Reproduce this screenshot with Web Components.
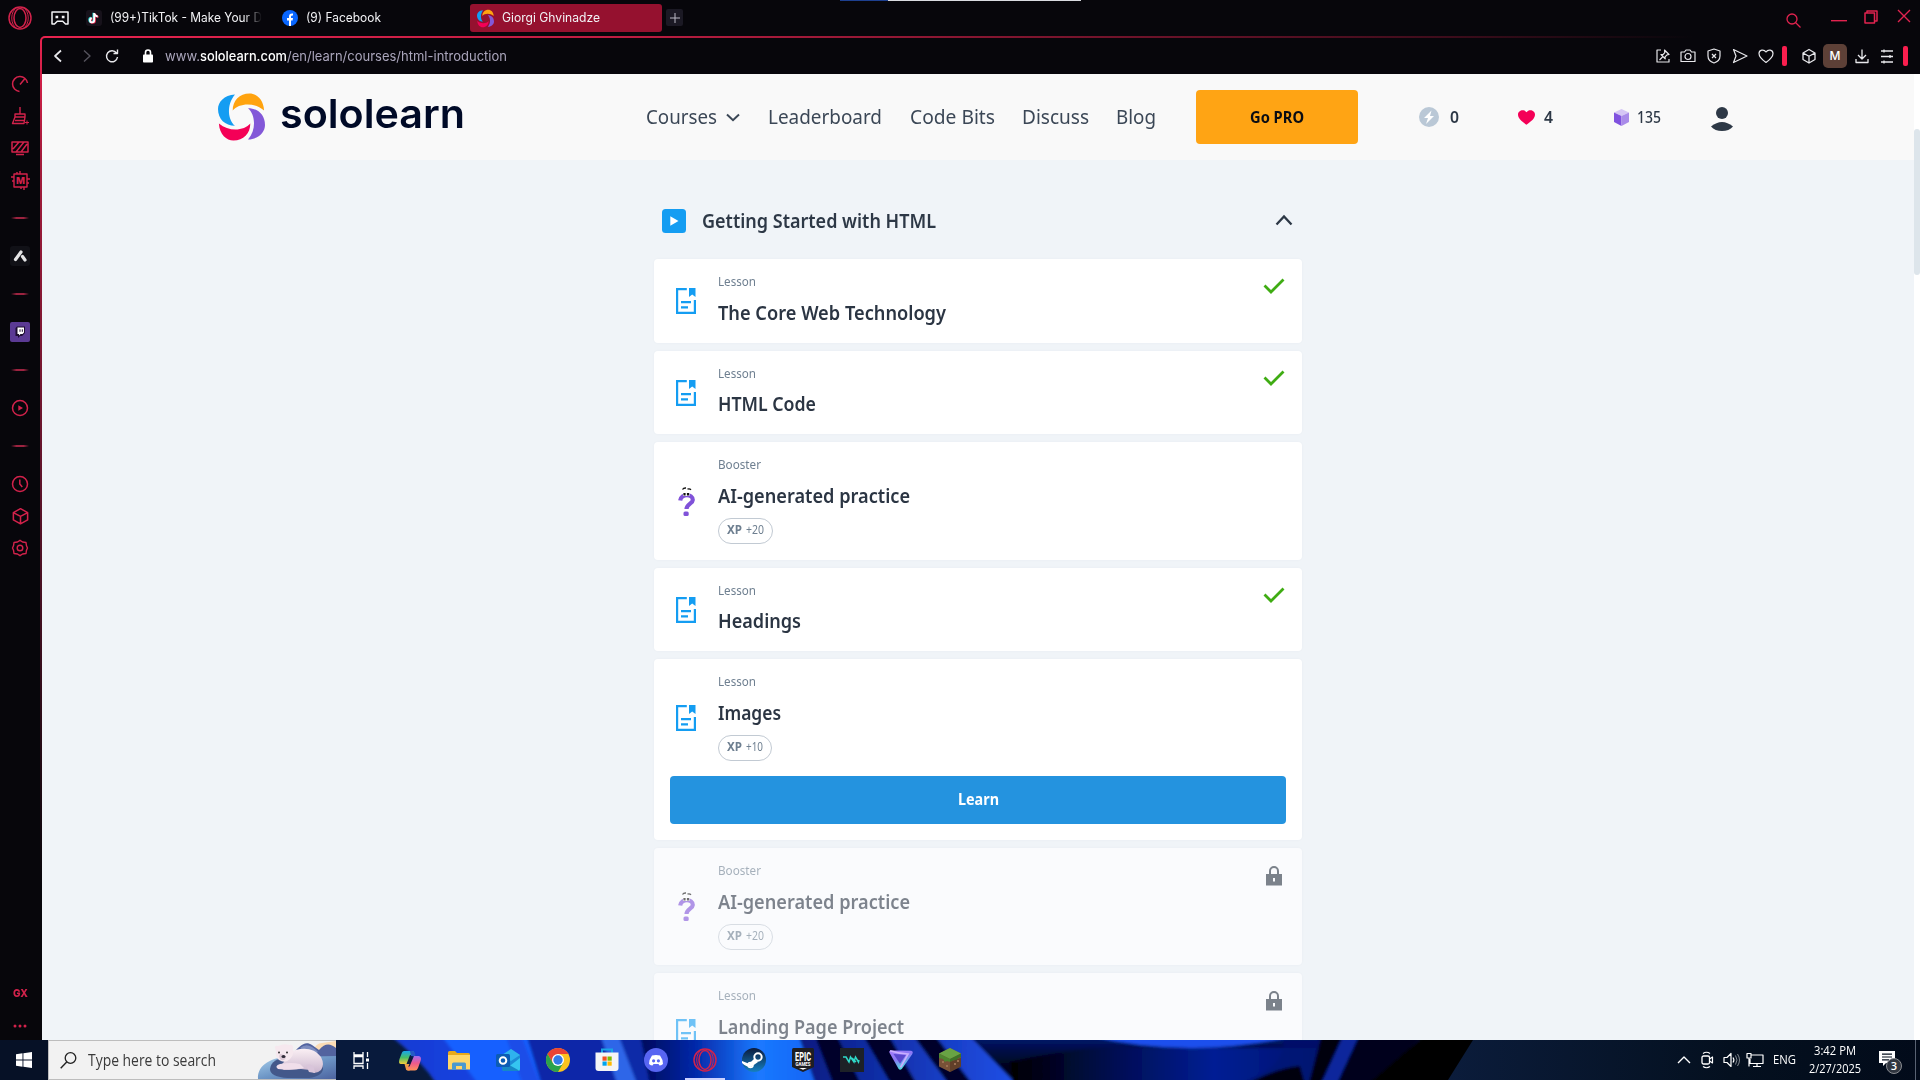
<!DOCTYPE html>
<html lang="en">
<head>
<meta charset="utf-8">
<title>Sololearn</title>
<style>
html,body{margin:0;padding:0;width:1920px;height:1080px;overflow:hidden;background:#07060b}
body{font-family:"Noto Sans","Open Sans",sans-serif}
</style>
</head>
<body>
<app-desktop></app-desktop>
<script>
const define=(n,c)=>customElements.define(n,c);
const mount=(el,html)=>{const t=document.createElement('template');t.innerHTML=html;el.attachShadow({mode:'open'}).appendChild(t.content.cloneNode(true));};

const swirl='M17 .4C6 1 0 8 0 15 0 25 7 31.800 17 31.800 10 26 8 11 17 .4Z';
const logo=`<path d="${swirl}" fill="#149df2"/><path d="${swirl}" fill="#ffa30f" transform="rotate(90 23.500 23)"/><path d="${swirl}" fill="#8358d8" transform="rotate(180 23.500 23)"/><path d="${swirl}" fill="#f40057" transform="rotate(270 23.500 23)"/>`;
const opera='<g fill="none" stroke="#d2224b" stroke-width="1.500"><circle cx="12" cy="12" r="11"/><ellipse cx="12" cy="12" rx="6" ry="9.500"/><path d="M9 1.500C2 5 2 19 9 22.500M15 1.500c7 3.500 7 17.500 0 21" stroke-width="1"/></g>';
const L='fill="none" stroke="currentColor" stroke-linejoin="round"';
/* name: [viewBox width, viewBox height, markup] */
const ICONS={
 logo:[47,46,logo],
 opera:[24,24,opera],
 mask:[18,14,`<path d="M1 1h16v12h-2.500l-2.800-2.700H6.300L3.500 13H1Z" ${L} stroke-width="1.500"/><path d="M4.500 4.700h2.700v2.600H4.500zM10.800 4.700h2.700v2.600h-2.700z" fill="currentColor"/>`],
 tiktok:[16,16,'<rect width="16" height="16" rx="3" fill="#17121b"/><g fill="none" stroke-width="1.900"><path d="M8 3v7.200a2.100 2.100 0 1 1-2.300-2.100M8 3.500q.8 2.700 3.500 2.900" stroke="#25d4cf" transform="translate(-.6 -.3)"/><path d="M8 3v7.200a2.100 2.100 0 1 1-2.300-2.100M8 3.500q.8 2.700 3.500 2.900" stroke="#e8254c" transform="translate(1 .5)"/><path d="M8 3v7.200a2.100 2.100 0 1 1-2.300-2.100M8 3.500q.8 2.700 3.500 2.900" stroke="#fff" transform="translate(.2 .1)"/></g>'],
 facebook:[16,16,'<circle cx="8" cy="8" r="8" fill="#0866ff"/><path d="M7 16v-5.500H5V8h2V6.500C7 4.300 8.300 3.200 11 3.500v2c-1.500 0-2 .2-2 1.300V8h2l-.4 2.500H9V16Z" fill="#fff"/>'],
 plus:[10,10,`<path d="M5 0v10M0 5h10" ${L}/>`],
 search:[15,15,`<circle cx="6" cy="6" r="5" ${L} stroke-width="1.300"/><path d="m9.500 9.500 5 5" ${L} stroke-width="1.300"/>`],
 min:[16,2,'<path d="M0 0h16v1.400H0z" fill="currentColor"/>'],
 restore:[14,14,`<path d="M1 3h9.500v10H1zM3 3V1h10v10h-2.500" ${L} stroke-width="1.500"/>`],
 close:[14,14,`<path d="m1 1 12 12M13 1 1 13" ${L} stroke-width="1.400"/>`],
 back:[10,14,`<path d="M8 1.500 2 7l6 5.500" ${L} stroke-width="1.700"/>`],
 fwd:[10,14,`<path d="m2 1.500 6 5.500-6 5.500" ${L} stroke-width="1.400"/>`],
 reload:[14,14,`<path d="M11.500 4A5.500 5.500 0 1 0 12.500 8M12.500.5V4.500H8.500" ${L} stroke-width="1.400"/>`],
 padlock:[12,14,`<rect x="1" y="5.500" width="10" height="8" rx=".8" fill="currentColor"/><path d="M3.500 6V3.500a2.500 2.500 0 0 1 5 0V6" ${L} stroke-width="1.600"/>`],
 pin:[16,16,`<path d="M6 2H2v12h12v-3M9.500 2l4.500 4.500-2 .3-2 2 .2 2L6 6.500l2 .2 1.800-2ZM7.500 9 4.500 12" ${L} stroke-width="1.200"/>`],
 camera:[16,16,`<path d="M1 4h3.500L6 2h4l1.500 2H15v9.500H1z" ${L} stroke-width="1.200"/><circle cx="8" cy="8.500" r="3" ${L} stroke-width="1.200"/>`],
 shield:[16,16,`<path d="M8 1 14 3v5c0 3.500-3 6-6 7-3-1-6-3.500-6-7V3ZM6 6l4 4m0-4-4 4" ${L} stroke-width="1.200"/>`],
 send:[16,16,`<path d="M1.500 1.500 15 8 1.500 14.500 4 8Z" ${L} stroke-width="1.200"/>`],
 heart:[16,16,`<path d="M8 14.500C4.500 12 1 9 1 5.500 1 1.500 6 1 8 4c2-3 7-2.500 7 1.500 0 3.500-3.500 6.500-7 9Z" ${L} stroke-width="1.200"/>`],
 cube:[16,16,`<path d="M8 1.500 14 5v6.500L8 15l-6-3.500V5ZM2 5l6 3.300L14 5M8 8.300V15" ${L} stroke-width="1.300"/>`],
 download:[16,16,`<path d="M8 1.500v9M4 7l4 4 4-4M2 11v3.500h12V11" ${L} stroke-width="1.300"/>`],
 sliders:[16,16,`<path d="M2 3h12M2 8.500h12M2 14h12M5 1.500v3M11 7v3M5 12.500v3" ${L} stroke-width="1.300"/>`],
 gauge:[18,18,`<path d="M8.500 16.500A7.500 7.500 0 1 1 16.500 8M9 9.500l5-6" ${L} stroke-width="1.500"/>`],
 broom:[18,18,`<path d="M9 0v7M4 7h10v3H4ZM4 10 1.500 16.500h11.500l1-6.500M4 13.500h10" ${L} stroke-width="1.400"/><path d="M16 13.500v4M14 15.500h4" ${L}/>`],
 screen:[18,16,`<path d="M1 2h16v10H1ZM5 14.500h8M2 9l6-7M5 12l8-10M10 12l6-8" ${L} stroke-width="1.500"/>`],
 chip:[20,20,`<path d="M4 4h13v13H4ZM7 4V2M10 4V1M14 17v3M11 17v2M4 7H1M4 11H2M17 9h3M17 13h2" ${L} stroke-width="1.400"/><text x="10.500" y="14" text-anchor="middle" font-family="Inter" font-weight="800" font-size="9.500" fill="currentColor">M</text>`],
 astro:[20,20,'<rect width="20" height="20" rx="3" fill="#111117"/><path d="m11 6-5.500 7.500M12.500 10.500 15 14" stroke="#e6e6e8" stroke-width="3.200" stroke-linecap="round"/>'],
 twitch:[20,20,'<rect width="20" height="20" rx="2" fill="#5b3a94"/><path d="M5.500 6 7 4.500h8V11l-3 3h-2l-2 2v-2H5.500Z" fill="#1d0d31"/><path d="M7.500 5.500H14v5L12.500 12H10.500L9 13.500V12H7.500Z" fill="#fff"/><path d="M10 7.300v2.500M12.300 7.300v2.500" stroke="#1d0d31"/>'],
 play:[18,18,`<circle cx="9" cy="9" r="7.500" ${L} stroke-width="1.500"/><path d="M7.300 6.200 12 9l-4.700 2.800Z" fill="currentColor"/>`],
 clock:[18,18,`<circle cx="9" cy="9" r="7.500" ${L} stroke-width="1.500"/><path d="M8.800 4.500V9l2.500 3" ${L} stroke-width="1.500"/>`],
 gear:[18,18,`<path d="M9 1.300 11.500 3l3.500.5.500 3.300L16.500 9l-1 2.200-.5 3.300-3.500.5L9 16.700 6.500 15 3 14.500l-.5-3.300L1.500 9l1-2.200L3 3.500 6.500 3Z" ${L} stroke-width="1.400"/><circle cx="9" cy="9" r="2.800" ${L} stroke-width="1.400"/>`],
 dots:[14,4,'<g fill="currentColor"><circle cx="2" cy="2" r="1.500"/><circle cx="7" cy="2" r="1.500"/><circle cx="12" cy="2" r="1.500"/></g>'],
 chevdown:[14,9,'<path d="m1 1.500 6 5.700 6-5.700" fill="none" stroke="currentColor" stroke-width="2"/>'],
 chevup:[18,11,'<path d="m1.500 9.500 7.500-8 7.500 8" fill="none" stroke="currentColor" stroke-width="2.300"/>'],
 bolt:[20,20,'<circle cx="10" cy="10" r="10" fill="#bac8d6"/><path d="M12.500 3.500 5 11h4l-2 6 8-8h-4Z" fill="#fff"/>'],
 heartfill:[17,15,'<path d="M8.500 14.700C4 11.500 0 8.500 0 4.500 0 .3 6-1.500 8.500 2.300 11-1.500 17 .3 17 4.500c0 4-4 7-8.500 10.200Z" fill="#f40057"/>'],
 gem:[15,17,'<path d="M7.500 0 15 3.500 7.500 7 0 3.500Z" fill="#d5c6f5"/><path d="M0 3.500 7.500 7v10L0 13Z" fill="#8052df"/><path d="M15 3.500 7.500 7v10L15 13Z" fill="#a98be9"/>'],
 person:[22,24,'<circle cx="11" cy="6" r="6" fill="#2d3846"/><path d="M0 19.500Q11 10.500 22 19.500 18 24 11 24T0 19.500Z" fill="#2d3846"/>'],
 module:[24,24,'<rect width="24" height="24" rx="3.500" fill="#149df2"/><path d="M8.300 7.300 16.500 12l-8.200 4.700Z" fill="#fff"/>'],
 lesson:[20,26,'<path d="M10.800 1.100H1.100v23.800h17.800V12" fill="none" stroke="#149df2" stroke-width="2.200"/><path d="M13 0h6.500v9L16.200 6.500 13 9Z" fill="#149df2"/><path d="M5 14.200h10M5 19.300h7" stroke="#149df2" stroke-width="2.200"/>'],
 booster:[18,29,'<path d="M2.200 13.500C3 6.500 15 6.500 14.800 13c0 3.500-6.300 4-6.300 9" fill="none" stroke="#8052d9" stroke-width="4.200"/><rect x="5.500" y="24.500" width="5.200" height="4.500" rx="1.500" fill="#8052d9"/><path d="M5 5h6.500v4H5Z" fill="#fff"/><path d="M6.500 6v2.500M10 6v2.500" stroke="#111" stroke-width="2.200"/><path d="M4.500 2.500Q5.500.8 8 1M9.500 2.200q2-1 3.500.6" stroke="#111" fill="none" stroke-width="1.300"/>'],
 check:[22,16,'<path d="m1.500 7.500 6.500 6.500L20.500 1.500" fill="none" stroke="#3fac13" stroke-width="2.800"/>'],
 lock:[16,20,'<path d="M4 8V5a4 4 0 0 1 8 0v3" fill="none" stroke="#7b828b" stroke-width="2"/><path fill-rule="evenodd" d="M0 8h16v11.500H0ZM7 12v3.500h2V12Z" fill="#7b828b"/>'],
 windows:[16,16,'<path d="M0 2.300 6.500 1.300V7.500H0ZM7.400 1.200 16 0v7.500H7.400ZM0 8.500h6.500v6.200L0 13.700ZM7.400 8.500H16V16l-8.600-1.200Z" fill="#fff"/>'],
 magnify:[17,17,'<circle cx="10.500" cy="6" r="5.300" fill="none" stroke="#222" stroke-width="1.300"/><path d="m6.700 10-6 6.300" stroke="#222" stroke-width="1.400"/>'],
 bear:[78,38,'<defs><linearGradient id="w" x2="1" y2="1"><stop stop-color="#a9d1ed"/><stop offset=".5" stop-color="#6d96c6"/><stop offset="1" stop-color="#4c639f"/></linearGradient><linearGradient id="b" x2="0" y2="1"><stop stop-color="#fbf0f4"/><stop offset="1" stop-color="#cbb6ce"/></linearGradient></defs><path d="M55 10Q58 2 64 2L78 0v20H55Z" fill="#fbdcb5"/><path d="M34 14C41 5 47 -1 54 4L61 9C67 2 72 2 78 7v20H36Z" fill="#52639f"/><path d="M42 7q8-7 18 4l-6 5Z" fill="#7d8dbf"/><path d="M0 38C-1 22 17 15 34 16l44-1v23Z" fill="url(#w)"/><path d="M12 28q1-11 20-12 30-1 33 10 1 9-14 11H30Q12 36 12 28Z" fill="#43588a"/><path d="M29 13C42 5 56 6 63 16q4 8 0 13-3 3-7 3l-4-3-9-1-17 1-5-3 5-5Z" fill="url(#b)"/><path d="M18 10q-3-6 2-5 7-3 11-1 5-1 4 4 1 6-3 10-5 5-11 1-4-3-3-9Z" fill="#f6e8ee"/><path d="M22 13q4 0 6 3-1 4-5 3-3-3-1-6Z" fill="#ddc9d5"/><circle cx="21" cy="11.500" r="1" fill="#333"/><circle cx="29" cy="11.500" r="1" fill="#333"/><ellipse cx="25.500" cy="15.500" rx="2" ry="1.500" fill="#302b38"/><path d="M22 23q12-2 20 0l4 4q-12 3-26 1-4-3 2-5Z" fill="#f0deea"/><path d="M48 24q6-2 8 3l1 5-6-1Z" fill="#d9c5da"/>'],
 taskview:[17,17,'<path d="M1 0v3h9V0M1 17v-3h9v3M1 4.500v7h9v-7ZM14.500 0v5M14.500 11v6" fill="none" stroke="#fff" stroke-width="1.300"/><path d="M13 6.500h3v3h-3z" fill="#fff"/>'],
 copilot:[22,21,'<defs><linearGradient id="c1" x2="0" y2="1"><stop stop-color="#17a5ef"/><stop offset=".5" stop-color="#46bd68"/><stop offset="1" stop-color="#f3ce3b"/></linearGradient><linearGradient id="c2" x2="0" y2="1"><stop stop-color="#a16af1"/><stop offset=".5" stop-color="#ef5a8c"/><stop offset="1" stop-color="#ff9258"/></linearGradient></defs><path d="M5 1h8q3 0 2 4h-4L7.500 14H2Q-1 14 .5 9L3 2.500Q3.500 1 5 1Z" fill="url(#c1)"/><path d="M15 6h5q3 1 1.500 5L19 18q-1 2.500-3 2.500H9q-3 0-2-4h3.500Z" fill="url(#c2)"/><path d="M11 1h2q3 0 3.500 5H12Z" fill="#2559c6"/><path d="M5.500 14h5l-1.500 3q0 3 2 3.500H9q-2 0-3.500-6.500" fill="#ef9c47"/>'],
 folder:[22,19,'<path d="M0 1.500Q0 0 1.500 0H7l2 2h11.500Q22 2 22 4v14H0Z" fill="#e8a91b"/><path d="M0 4h22v14.500H0Z" fill="#ffd768"/><path d="M4 19v-6q0-1.500 1.500-1.500h11Q18 11.500 18 13v6h-4v-4H8v4Z" fill="#4a99cf"/>'],
 outlook:[24,22,'<path d="M6 6 15 0l9 6v14q0 2-2 2H8q-2 0-2-2Z" fill="#1c8ad6"/><path d="m15 0 9 6-9 6-9-6Z" fill="#2fb2ee"/><path d="m7 22 17-13v11q0 2-2 2Z" fill="#35c5f0"/><path d="m6 12 17 9.500-1 .5H8q-2 0-2-2Z" fill="#1687c6"/><rect y="5" width="14" height="13" rx="1.500" fill="#0b5cb5"/><circle cx="7" cy="11.500" r="3.300" fill="none" stroke="#fff" stroke-width="2"/>'],
 chrome:[24,24,'<circle cx="12" cy="12" r="12" fill="#fcc31e"/><path d="M1.600 6A12 12 0 0 1 22.400 6H12L6.800 15Z" fill="#ea4335"/><path d="M1.600 6A12 12 0 0 0 12 24l5.200-9H6.800Z" fill="#2ba24c"/><circle cx="12" cy="12" r="6" fill="#fff"/><circle cx="12" cy="12" r="4.700" fill="#337ae8"/>'],
 store:[24,24,'<path d="M7 6V1.500h10V6" fill="none" stroke="#19a4e5" stroke-width="2"/><path d="M.5 4.500h23V20q0 3-3 3h-17q-3 0-3-3Z" fill="#f4f4f6"/><path d="M7.500 8.500h4.200v4.200H7.500z" fill="#f25022"/><path d="M12.500 8.500h4.200v4.200h-4.200z" fill="#7fba00"/><path d="M7.500 13.500h4.200v4.200H7.500z" fill="#00a4ef"/><path d="M12.500 13.500h4.200v4.200h-4.200z" fill="#ffb900"/>'],
 discord:[24,24,'<circle cx="12" cy="12" r="12" fill="#5865f2"/><path d="M8 7.500Q12 6.300 16 7.500q3 4 3 8.500-2 1.500-3.500 1.500l-1-1.500h-5l-1 1.500Q7 17.500 5 16q0-4.500 3-8.500Z" fill="#fff"/><circle cx="9.600" cy="12.800" r="1.600" fill="#5865f2"/><circle cx="14.400" cy="12.800" r="1.600" fill="#5865f2"/>'],
 steam:[24,24,'<defs><linearGradient id="s" x2="0" y2="1"><stop stop-color="#0b1a3c"/><stop offset="1" stop-color="#1580c0"/></linearGradient></defs><circle cx="12" cy="12" r="12" fill="url(#s)"/><circle cx="16" cy="9" r="3.700" fill="none" stroke="#fff" stroke-width="2"/><path d="m0 13 7 2.800 6-5.800 3 4-7 5Q4 19 0 15Z" fill="#fff"/><circle cx="8.500" cy="17" r="2.500" fill="none" stroke="#fff" stroke-width="1.500"/>'],
 epic:[22,24,'<path d="M1.500 0h19Q22 0 22 2v17l-11 5L0 19V2Q0 0 1.500 0Z" fill="#1e1e22"/><text x="11" y="12.500" text-anchor="middle" textLength="16" lengthAdjust="spacingAndGlyphs" font-family="Roboto" font-weight="800" font-size="13" fill="#fff">EPIC</text><text x="11" y="17.500" text-anchor="middle" textLength="15" lengthAdjust="spacingAndGlyphs" font-family="Roboto" font-weight="700" font-size="5" fill="#fff">GAMES</text><path d="M7 20h8l-4 1.800Z" fill="#fff"/>'],
 wave:[24,24,'<path d="M0 0h24v24H0z" fill="#1d2127"/><path d="M3 9h3l3 5 1.500-5 3.500 5 1.500-5 3 5 .5-2M6 9l3 5M12 10l4 4" fill="none" stroke="#2fd9c9" stroke-width="1.500"/>'],
 proton:[24,24,'<defs><linearGradient id="p" x2=".5" y2="1"><stop stop-color="#a77dfa"/><stop offset=".5" stop-color="#8a78f6"/><stop offset="1" stop-color="#4ce1dd"/></linearGradient></defs><path d="M2 1.500 22 2q3 .5 1 4L13 21.500q-2 2-3.500 0L.5 4Q-.3 2 2 1.500Z" fill="url(#p)"/><path d="m4.500 5.500 12.500.8-6 9.700Z" fill="#5a48cf"/><path d="M1 2q8 3 18 3.500L11.500 20" fill="none" stroke="#c9afff" stroke-width="1.800"/>'],
 minecraft:[22,24,'<path d="M11 0 22 5.500v13L11 24 0 18.500v-13Z" fill="#785137"/><path d="M11 0 22 5.500 11 11 0 5.500Z" fill="#68a344"/><path d="m0 5.500 11 5.500v3l-3-1-2 1-2-3-4-1Z" fill="#4d872f"/><path d="m22 5.500-11 5.500v3l4-2 2 1 2-3 3-1Z" fill="#3d7227"/><path d="M11 14v10l11-5.500V10Z" fill="#543622" opacity=".65"/><path d="M3 13h2v2H3zM7 17h2v2H7zM15 15h2v2h-2zM18 12h2v2h-2z" fill="#9a7051"/>'],
 trayup:[14,8,`<path d="m1 7 6-6 6 6" ${L} stroke-width="1.400"/>`],
 meet:[13,18,`<rect x="1" y="5" width="7.500" height="8" rx="1.500" ${L} stroke-width="1.300"/><path d="m8.500 8 3-2v6l-3-2M2 2.500q3.500-2.500 7 0M2 15.500q3.500 2.500 7 0" ${L} stroke-width="1.200"/>`],
 volume:[17,16,`<path d="M1 5.500h3l4-4v13l-4-4H1Z" ${L} stroke-width="1.200"/><path d="M10 5.500q1.800 2.500 0 5" ${L} stroke-width="1.200"/><g opacity=".5"><path d="M12.500 3.500q3 4.500 0 9M14.500 2q4 6 0 12" ${L}/></g>`],
 network:[18,16,`<path d="M5 3h12v8.500H4V7M7 14.500h8M11 11.500v3M1 1.500h4V6H1ZM3 6v8.500" ${L} stroke-width="1.200"/>`],
 notice:[16,15,'<path d="M0 0h16v12H7l-3 3v-3H0Z" fill="#fff"/><path d="M3 3.200h10M3 6h10M3 8.800h7" stroke="#06101f" stroke-width="1.200"/>']
};

/* <ui-icon name w h> draws one icon, scaled to its box */
define('ui-icon',class extends HTMLElement{
 connectedCallback(){if(this.shadowRoot)return;
  const i=ICONS[this.getAttribute('name')],w=this.getAttribute('w')||i[0],h=this.getAttribute('h')||i[1];
  mount(this,`<style>:host{display:block;flex:none;width:${w}px;height:${h}px}svg{display:block;overflow:visible}</style><svg width="${w}" height="${h}" viewBox="0 0 ${i[0]} ${i[1]}" preserveAspectRatio="none">${i[2]}</svg>`);}
});

/* <fit-text w> keeps its single line exactly w pixels wide */
define('fit-text',class extends HTMLElement{
 connectedCallback(){if(this.shadowRoot)return;
  const w=+this.getAttribute('w');
  mount(this,`<style>:host{display:block;flex:none;width:${w}px;white-space:nowrap}span{display:inline-block;transform-origin:0 50%}</style><span><slot></slot></span>`);
  const s=this.shadowRoot.querySelector('span');
  s.style.transform=`scaleX(${w/s.getBoundingClientRect().width})`;}
});

define('browser-tabs',class extends HTMLElement{connectedCallback(){mount(this,`<style>
:host{display:flex;height:36px;align-items:flex-start;color:#f2f2f5;background:linear-gradient(90deg,#1d3f8f 48px,#d9dbe0 48px) 840px 0/241px 1px no-repeat #07060b;font:12.500px/18px Inter,sans-serif;box-sizing:border-box}
.o{margin:6px 0 0 8px}.k{margin:11px 0 0 19px}.t{display:flex;gap:8px;height:28px;align-items:center;margin-top:4px}
.t1{margin-left:17px;width:176px;-webkit-mask:linear-gradient(90deg,#000 158px,transparent 176px)}.t2{margin-left:20px;width:188px}
.a{background:#95112f;border-radius:3px;width:185px;padding-left:7px}
.p{display:grid;place-items:center;width:17px;height:17px;margin:9px 0 0 4px;background:#1b1924;border-radius:2px;color:#bbb9c4}
.w{display:flex;margin-left:auto;color:#e1234f;padding-right:9px}
</style><ui-icon class="o" name="opera" w="24" h="24"></ui-icon><ui-icon class="k" name="mask"></ui-icon>
<div class="t t1"><ui-icon name="tiktok"></ui-icon><fit-text w="152">(99+)TikTok - Make Your D</fit-text></div>
<div class="t t2"><ui-icon name="facebook"></ui-icon><fit-text w="75">(9) Facebook</fit-text></div>
<div class="t a"><ui-icon name="logo" w="17" h="17"></ui-icon><fit-text w="98">Giorgi Ghvinadze</fit-text></div>
<div class="p"><ui-icon name="plus"></ui-icon></div>
<div class="w"><ui-icon name="search" style="margin:13px 30px 0 0"></ui-icon><ui-icon name="min" style="margin:20px 17px 0 0"></ui-icon><ui-icon name="restore" style="margin:10px 19px 0 0"></ui-icon><ui-icon name="close" style="margin-top:9px"></ui-icon></div>`);}});

define('side-rail',class extends HTMLElement{connectedCallback(){mount(this,`<style>
:host{display:flex;flex-direction:column;align-items:center;width:40px;height:1004px;background:#07060b;color:#d2224b;box-sizing:border-box;padding-top:32px}
div{height:32px;width:40px;display:grid;place-items:center}
hr{border:0;margin:22px 0;width:18px;height:2px;flex:none;background:linear-gradient(90deg,transparent,#9c2340 30%,#9c2340 70%,transparent)}
div.s{height:30px}.g{margin-top:auto;font:800 11px/14px Inter,sans-serif;height:14px}.d{height:4px;margin:24px 0 12px}
</style><div><ui-icon name="gauge"></ui-icon></div><div><ui-icon name="broom"></ui-icon></div><div><ui-icon name="screen"></ui-icon></div><div><ui-icon name="chip"></ui-icon></div>
<hr style="margin-top:21px"><div class="s"><ui-icon name="astro"></ui-icon></div><hr><div class="s"><ui-icon name="twitch"></ui-icon></div><hr><div class="s"><ui-icon name="play"></ui-icon></div><hr><div class="s"><ui-icon name="clock"></ui-icon></div><div style="margin-top:1px"><ui-icon name="cube" w="19" h="18"></ui-icon></div><div><ui-icon name="gear"></ui-icon></div>
<div class="g"><fit-text w="15">GX</fit-text></div><div class="d"><ui-icon name="dots"></ui-icon></div>`);}});

define('address-bar',class extends HTMLElement{connectedCallback(){mount(this,`<style>
:host{display:flex;height:36px;align-items:center;background:#07060b;color:#e8e8ec;font:13.500px/20px Inter,sans-serif;border-top-left-radius:3px;box-sizing:border-box;padding:0 12px 0 11px}
.u{display:flex;color:#aaa5bb;margin-left:11px}b{font-weight:500;color:#fff}
.r{display:flex;align-items:center;margin-left:auto}.bar{width:5px;height:20px;border-radius:2px;background:#fa1e4e}
.m{display:grid;place-items:center;width:24px;height:24px;border-radius:5px;background:#5d4037;font:500 12px/24px Inter,sans-serif;color:#fff}
</style><ui-icon name="back"></ui-icon><ui-icon name="fwd" style="margin-left:19px;color:#55535d"></ui-icon><ui-icon name="reload" style="margin-left:13px"></ui-icon><ui-icon name="padlock" style="margin-left:23px;color:#fff"></ui-icon>
<div class="u"><fit-text w="35">www.</fit-text><fit-text w="87"><b>sololearn.com</b></fit-text><fit-text w="220">/en/learn/courses/html-introduction</fit-text></div>
<div class="r"><ui-icon name="pin"></ui-icon><ui-icon name="camera" style="margin-left:9px"></ui-icon><ui-icon name="shield" style="margin-left:10px"></ui-icon><ui-icon name="send" style="margin-left:10px"></ui-icon><ui-icon name="heart" style="margin-left:10px"></ui-icon><div class="bar" style="margin-left:8px"></div><ui-icon name="cube" style="margin-left:14px"></ui-icon><div class="m" style="margin-left:6px">M</div><ui-icon name="download" style="margin-left:7px"></ui-icon><ui-icon name="sliders" style="margin-left:9px"></ui-icon><div class="bar" style="margin-left:8px"></div></div>`);}});

define('site-header',class extends HTMLElement{connectedCallback(){mount(this,`<style>
:host{display:flex;align-items:center;height:86px;flex:none;box-sizing:border-box;background:#f9f9f9;padding-left:176px;color:#2d3846;font-size:20px;line-height:28px}
.n{display:flex;align-items:center;color:#3b4756}
.b{display:grid;place-items:center;width:162px;height:54px;border-radius:4px;background:#ffa414;color:#0b0d13;font-size:16px;font-weight:700;margin:0 61px 0 40px}
.s{display:flex;align-items:center;font-size:16px;font-weight:600}
.l{font:600 40px/46px Inter,sans-serif;color:#000a27;margin:-6px 181px 0 15px}
</style><ui-icon name="logo"></ui-icon><fit-text class="l" w="185">sololearn</fit-text>
<div class="n"><fit-text w="71">Courses</fit-text><ui-icon name="chevdown" style="margin:0 28px 0 9px"></ui-icon><fit-text w="114">Leaderboard</fit-text><fit-text w="85" style="margin-left:28px">Code Bits</fit-text><fit-text w="67" style="margin-left:27px">Discuss</fit-text><fit-text w="40" style="margin-left:27px">Blog</fit-text></div>
<div class="b"><fit-text w="54" style="margin:-1px 1px 0 0">Go PRO</fit-text></div>
<div class="s"><ui-icon name="bolt"></ui-icon><fit-text w="9" style="margin-left:11px">0</fit-text><ui-icon name="heartfill" style="margin-left:59px"></ui-icon><fit-text w="9" style="margin-left:9px">4</fit-text><ui-icon name="gem" style="margin-left:61px"></ui-icon><fit-text w="24" style="margin-left:8px;font-weight:500">135</fit-text><ui-icon name="person" style="margin:4px 0 0 50px"></ui-icon></div>`);}});

/* <lesson-card kind heading w xp state> one row of the module */
define('lesson-card',class extends HTMLElement{connectedCallback(){
 const g=k=>this.getAttribute(k),kind=g('kind'),boost=kind==='Booster',st=g('state'),tight=g('rh')==='83';
 mount(this,`<style>
:host{display:block;flex:none;box-sizing:border-box;width:648px;background:#fff;border-radius:4px;box-shadow:0 0 3px rgba(40,60,90,.035);color:#2b3543}
:host([state=locked]){background:#fafbfd}
.row{display:flex;height:${g('rh')}px;box-sizing:border-box}
.i{width:64px;display:flex;align-items:center;padding-left:${boost?24:22}px;box-sizing:border-box}
.c{flex:1;padding-top:13px}.k{font-size:12.500px;line-height:20px;color:#6e7f90}
.t{font-size:20px;line-height:28px;font-weight:600;margin-top:${tight?6:7}px}
.x{display:inline-flex;gap:4px;height:26px;border:1px solid #c2cad3;border-radius:13px;box-sizing:border-box;padding:0 8px;line-height:22px;font-size:12.500px;color:#6e7f90;margin-top:8px}
.x b{font-weight:700}.e{padding:19px 17px 0 0}
:host([state=locked]) :is(.t,.k,.x,.i){opacity:.6}:host([state=locked]) .e{padding:18px 20px 0 0}
.btn{display:grid;place-items:center;height:48px;margin:0 16px;border-radius:4px;background:#2493df;color:#fff;font-size:16px;font-weight:700}
</style><div class="row"><div class="i"><ui-icon name="${boost?'booster':'lesson'}"></ui-icon></div><div class="c"><fit-text class="k" w="${boost?43:38}">${kind}</fit-text><fit-text class="t" w="${g('w')}">${g('heading')}</fit-text>${g('xp')?`<div class="x"><fit-text w="15"><b>XP</b></fit-text><fit-text w="${g('xp')==='+10'?17:18}">${g('xp')}</fit-text></div>`:''}</div><div class="e">${st==='done'?'<ui-icon name="check"></ui-icon>':st==='locked'?'<ui-icon name="lock"></ui-icon>':''}</div></div>${st==='open'?'<div class="btn"><fit-text w="41" style="margin-top:-2px">Learn</fit-text></div>':''}`);}});

define('course-module',class extends HTMLElement{connectedCallback(){mount(this,`<style>
:host{display:flex;flex-direction:column;gap:8px;width:648px;margin-left:612px}
.h{display:flex;align-items:center;height:44px;margin:39px 0 8px;padding:0 9px 0 8px;color:#2d3846;font-size:20px;font-weight:600;line-height:28px}
</style><div class="h"><ui-icon name="module"></ui-icon><fit-text w="234" style="margin:-1px auto 0 16px">Getting Started with HTML</fit-text><ui-icon name="chevup" style="margin-top:-2px"></ui-icon></div><slot></slot>`);}});

define('web-page',class extends HTMLElement{connectedCallback(){mount(this,`<style>
:host{display:flex;height:966px;overflow:hidden;background:#f0f4f8}
.v{flex:1;display:flex;flex-direction:column;overflow:hidden}
.sb{width:6px;background:#fff;padding-top:55px;box-sizing:border-box}.sb div{height:146px;background:#dde5eb;border-radius:3px}
</style><div class="v"><site-header></site-header><course-module>
<lesson-card style="height:84px" rh="84" kind="Lesson" heading="The Core Web Technology" w="228" state="done"></lesson-card>
<lesson-card style="height:83px" rh="83" kind="Lesson" heading="HTML Code" w="98" state="done"></lesson-card>
<lesson-card style="height:118px" rh="118" kind="Booster" heading="AI-generated practice" w="192" xp="+20"></lesson-card>
<lesson-card style="height:83px" rh="83" kind="Lesson" heading="Headings" w="83" state="done"></lesson-card>
<lesson-card style="height:181px" rh="117" kind="Lesson" heading="Images" w="63" xp="+10" state="open"></lesson-card>
<lesson-card style="height:117px" rh="117" kind="Booster" heading="AI-generated practice" w="192" xp="+20" state="locked"></lesson-card>
<lesson-card style="height:117px" rh="117" kind="Lesson" heading="Landing Page Project" w="186" state="locked"></lesson-card>
</course-module></div><div class="sb"><div></div></div>`);}});

define('task-bar',class extends HTMLElement{connectedCallback(){
 const apps=[['taskview',17,17],['copilot',22,21],['folder',22,19],['outlook',24,22],['chrome',24,24],['store',24,24],['discord',24,24],['opera',24,24],['steam',24,24],['epic',22,24],['wave',24,24],['proton',24,22],['minecraft',22,24]];
 mount(this,`<style>
:host{display:grid;height:40px;width:1920px;color:#fff;font-family:"Open Sans","Noto Sans",sans-serif;overflow:hidden}
.bg,.row{grid-area:1/1}.bg{display:block}.row{display:flex;height:40px;align-items:center}
.start{width:48px;display:grid;place-items:center}
.s{display:flex;align-items:center;width:288px;height:40px;box-sizing:border-box;background:#f2f2f2;border:1px solid #bdbdbd;border-width:1px 0 1px 1px;color:#3a3a3a;font-size:16px;line-height:24px;padding-left:11px}
.a{display:flex;margin-left:.6px}.a div{width:49.100px;height:40px;display:grid;place-items:center;box-sizing:border-box}
.a .on{background:linear-gradient(#cbd2ff,#cbd2ff) 50% 100%/40px 2px no-repeat}
.tr{display:flex;align-items:center;margin-left:auto;height:40px}
.dt{display:flex;flex-direction:column;align-items:center;font-size:12.500px;line-height:18px;margin:0 18px 0 13px}
.n{display:grid;width:24px;height:26px;margin-right:12px}.n>*{grid-area:1/1}.n ui-icon{margin-top:4px}
.bd{width:14px;height:14px;border:1px solid #8b8d92;border-radius:50%;background:#303640;font:600 11px/14px "Open Sans";text-align:center;place-self:end;margin:0 1px -1px 0}
.end{width:4px;height:40px;border-left:1px solid #596272}
</style><svg class="bg" width="1920" height="40" viewBox="0 0 1920 40"><defs><filter id="f" x="-5%" y="-20%" width="110%" height="140%"><feGaussianBlur stdDeviation="1.400"/></filter>
<linearGradient id="g2"><stop stop-color="#153ad2"/><stop offset=".5" stop-color="#1746e6"/><stop offset="1" stop-color="#0829a0"/></linearGradient>
<linearGradient id="g3"><stop stop-color="#02085a"/><stop offset=".3" stop-color="#0428a8"/><stop offset=".65" stop-color="#1a79ff"/><stop offset="1" stop-color="#1462f4"/></linearGradient>
<linearGradient id="g4" x2="0" y2="1"><stop stop-color="#071775"/><stop offset=".6" stop-color="#01051e"/><stop offset="1" stop-color="#000312"/></linearGradient>
<linearGradient id="g5"><stop stop-color="#0b1c3b"/><stop offset=".6" stop-color="#04101f"/><stop offset="1" stop-color="#020b1a"/></linearGradient>
<linearGradient id="g6"><stop stop-color="#000"/><stop offset=".3" stop-color="#020c50"/><stop offset=".6" stop-color="#061e94"/><stop offset="1" stop-color="#031064"/></linearGradient>
<linearGradient id="g7"><stop stop-color="#061a80"/><stop offset="1" stop-color="#2050e8"/></linearGradient></defs>
<path fill="#061126" d="M0 0h48v40H0z"/><path fill="#081a3c" d="M336 0h1140v40H336z"/>
<g filter="url(#f)"><path fill="url(#g2)" d="M388-6h260v52H438Q420 18 388-6Z"/><path fill="#1260ff" d="M440-6h90l14 52h-64Z"/><path d="M526-6h90l8 52h-82Z" fill="#0726a8"/><path d="M505-6h16l20 52h-18Z" fill="#1a4ee8"/>
<path fill="#2e66e8" d="M600-6h18l20 52h-20Z"/><path fill="#0a2aa8" d="M618-6h34v52h-14Z"/>
<path fill="url(#g3)" d="M640-6h165l17 52H650Z"/><path fill="#02052c" d="M800-6h220v52H818Z"/>
<path fill="url(#g7)" d="M798-6h16l20 52h-18ZM836-6h26l30 52h-30ZM888-6h24l38 52h-32ZM934-6h34l50 52h-44Z"/>
<path fill="url(#g4)" d="M970-6h350v52h-300Z"/><path fill="url(#g6)" d="M1010 22Q1070 8 1110 8h240v38H1013Z"/><path fill="#1e50ed" d="M1090-4h205Q1190 20 1090-4Z"/><path fill="#041073" d="M1283 0h145l-70 46h-130q60-16 55-46Z" opacity=".6"/>
<path fill="#000009" d="M1250 42q30-15 50-16l5 18ZM1322-6h40l-22 52h-32Z"/><path fill="#08259c" d="M1344-6h16l-24 52h-16Z"/><path fill="#01021c" d="M1360-6h64l-52 52h-36Z"/><path fill="#000" d="M1426-6h60v52h-120Z"/></g>
<path fill="url(#g5)" d="M1473 0h447v40h-472Z"/></svg>
<div class="row"><div class="start"><ui-icon name="windows"></ui-icon></div>
<div class="s"><ui-icon name="magnify"></ui-icon><fit-text w="128" style="margin-left:11px">Type here to search</fit-text><ui-icon name="bear" style="margin-left:auto"></ui-icon></div>
<div class="a">${apps.map(a=>`<div class="${a[0]==='opera'?'on':''}"><ui-icon name="${a[0]}" w="${a[1]}" h="${a[2]}"></ui-icon></div>`).join('')}</div>
<div class="tr"><ui-icon name="trayup"></ui-icon><ui-icon name="meet" style="margin-left:10px"></ui-icon><ui-icon name="volume" style="margin-left:9px"></ui-icon><ui-icon name="network" style="margin-left:6px"></ui-icon><fit-text w="23" style="margin-left:9px;font-size:12.500px;line-height:18px">ENG</fit-text>
<div class="dt"><fit-text w="42">3:42 PM</fit-text><fit-text w="52">2/27/2025</fit-text></div>
<div class="n"><ui-icon name="notice"></ui-icon><div class="bd">3</div></div><div class="end"></div></div></div>`);}});

define('app-desktop',class extends HTMLElement{connectedCallback(){mount(this,`<style>
:host{display:flex;flex-direction:column;width:1920px;height:1080px;overflow:hidden}
.m{display:flex;height:1004px}
.f{flex:1;min-width:0;box-sizing:border-box;padding:2px 0 0 2px;border-top-left-radius:5px;background:linear-gradient(90deg,#e8234f,#c01d42 30%,#3d0c1b 75%,#07060b 88%) 0 0/100% 2px no-repeat,linear-gradient(#e8234f,#a51c3c 12%,#5e142b 45%,#07060b 85%) 0 0/6px 100% no-repeat #07060b}
</style><browser-tabs></browser-tabs><div class="m"><side-rail></side-rail><div class="f"><address-bar></address-bar><web-page></web-page></div></div><task-bar></task-bar>`);}});
</script>
</body>
</html>
